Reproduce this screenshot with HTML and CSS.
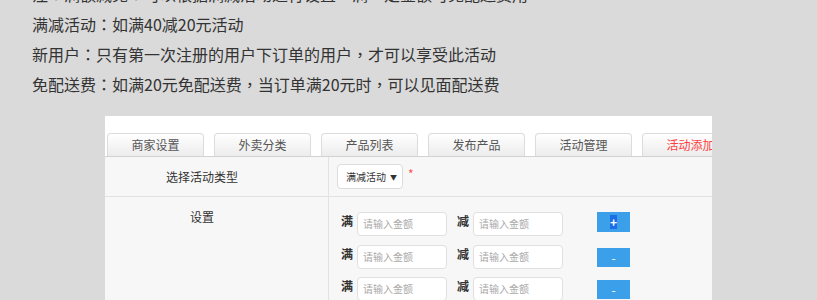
FILE: index.html
```html
<!DOCTYPE html>
<html>
<head>
<meta charset="utf-8">
<link rel="stylesheet" href="styles.css">
</head>
<body>
<div class="notes">
  <p>注<span class="pu">：</span>满额减免<span class="pu">：</span>可以根据满减活动进行设置<span class="pu">，</span>满一定金额可免配送费用</p>
  <p>满减活动<span class="pu">：</span>如满40减20元活动</p>
  <p>新用户<span class="pu">：</span>只有第一次注册的用户下订单的用户<span class="pu">，</span>才可以享受此活动</p>
  <p>免配送费<span class="pu">：</span>如满20元免配送费<span class="pu">，</span>当订单满20元时<span class="pu">，</span>可以见面配送费</p>
</div>
<div class="panel">
  <div class="tabs">
    <div class="tab">商家设置</div>
    <div class="tab">外卖分类</div>
    <div class="tab">产品列表</div>
    <div class="tab">发布产品</div>
    <div class="tab">活动管理</div>
    <div class="tab active">活动添加</div>
  </div>
  <div class="form">
    <div class="row row-type">
      <div class="label">选择活动类型</div>
      <div class="field">
        <div class="select"><span>满减活动</span><span class="arrow">▼</span></div>
        <span class="req">*</span>
      </div>
    </div>
    <div class="row row-set">
      <div class="label label-top">设置</div>
      <div class="field rules">
        <div class="rule">
          <span class="w">满</span><div class="input">请输入金额</div>
          <span class="w w2">减</span><div class="input">请输入金额</div>
          <div class="btn btn-first"><span class="sel">+</span></div>
        </div>
        <div class="rule">
          <span class="w">满</span><div class="input">请输入金额</div>
          <span class="w w2">减</span><div class="input">请输入金额</div>
          <div class="btn">-</div>
        </div>
        <div class="rule">
          <span class="w">满</span><div class="input">请输入金额</div>
          <span class="w w2">减</span><div class="input">请输入金额</div>
          <div class="btn">-</div>
        </div>
      </div>
    </div>
  </div>
</div>
</body>
</html>
```

FILE: styles.css
```css
html, body {
  margin: 0;
  padding: 0;
  background: #dadada;
  height: 300px;
  overflow: hidden;
  font-family: "Noto Sans CJK SC", "Noto Sans", sans-serif;
}

.notes {
  margin-top: -21px;
  padding-left: 32px;
}

.notes p {
  margin: 0;
  font-size: 16px;
  line-height: 30px;
  color: #333;
  white-space: nowrap;
}

.pu {
  font-family: "Noto Sans CJK TC", sans-serif;
}

.panel {
  margin-top: 17px;
  margin-left: 105px;
  width: 607px;
  background: #f7f7f7;
  overflow: hidden;
  height: 184px;
}

.tabs {
  background: #fff;
  padding: 17px 0 0 2px;
  display: flex;
  border-bottom: 1px solid #d2d2d2;
  white-space: nowrap;
}

.tab {
  flex: none;
  width: 95px;
  height: 22px;
  margin-right: 10px;
  border: 1px solid #dcdcdc;
  border-bottom: none;
  border-radius: 4px 4px 0 0;
  background: linear-gradient(#ffffff, #ececec);
  font-size: 12px;
  line-height: 22px;
  text-align: center;
  color: #555;
}

.tab.active {
  color: #ff4040;
}

.row {
  display: flex;
}

.row-type {
  height: 39px;
  border-bottom: 1px solid #e2e2e2;
}

.label {
  width: 194px;
  padding-right: 29px;
  border-right: 1px solid #e2e2e2;
  font-size: 12px;
  color: #333;
  text-align: center;
  display: flex;
  align-items: center;
  justify-content: center;
  white-space: nowrap;
}

.label-top {
  align-items: flex-start;
  padding-top: 11px;
  height: 110px;
}

.field {
  display: flex;
  align-items: center;
  padding-left: 8px;
}

.select {
  border: 1px solid #dcdcdc;
  border-radius: 4px;
  background: #fff;
  display: flex;
  align-items: center;
  justify-content: space-between;
  padding: 0 5px 0 8px;
  box-sizing: border-box;
  width: 66px;
  height: 25px;
  font-size: 10px;
  color: #333;
  white-space: nowrap;
}

.arrow {
  font-size: 7px;
  color: #333;
}

.req {
  color: #ff5050;
  font-size: 12px;
  margin-left: 5px;
  margin-top: -6px;
}

.rules {
  flex-direction: column;
  align-items: flex-start;
  padding-left: 12px;
  padding-top: 15px;
  gap: 8.5px;
}

.rule {
  display: flex;
  align-items: flex-start;
  height: 24px;
  white-space: nowrap;
}

.w {
  font-size: 12px;
  font-weight: bold;
  color: #333;
  line-height: 18px;
  margin-right: 4px;
}

.w2 {
  margin-left: 10px;
}

.input {
  width: 90px;
  height: 24px;
  box-sizing: border-box;
  border: 1px solid #e0e0e0;
  border-radius: 4px;
  background: #fff;
  font-size: 10px;
  line-height: 22px;
  color: #aaa;
  padding-left: 5px;
}

.btn {
  width: 33px;
  height: 19px;
  margin-left: 34px;
  margin-top: 3px;
  background: #3c9fea;
  color: #fff;
  font-size: 12px;
  line-height: 19px;
  text-align: center;
}

.btn-first {
  margin-top: 0;
  height: 20px;
  line-height: 20px;
}

.sel {
  display: inline-block;
  background: #1a6fe6;
  width: 7px;
  line-height: 14px;
  font-weight: bold;
}
```
